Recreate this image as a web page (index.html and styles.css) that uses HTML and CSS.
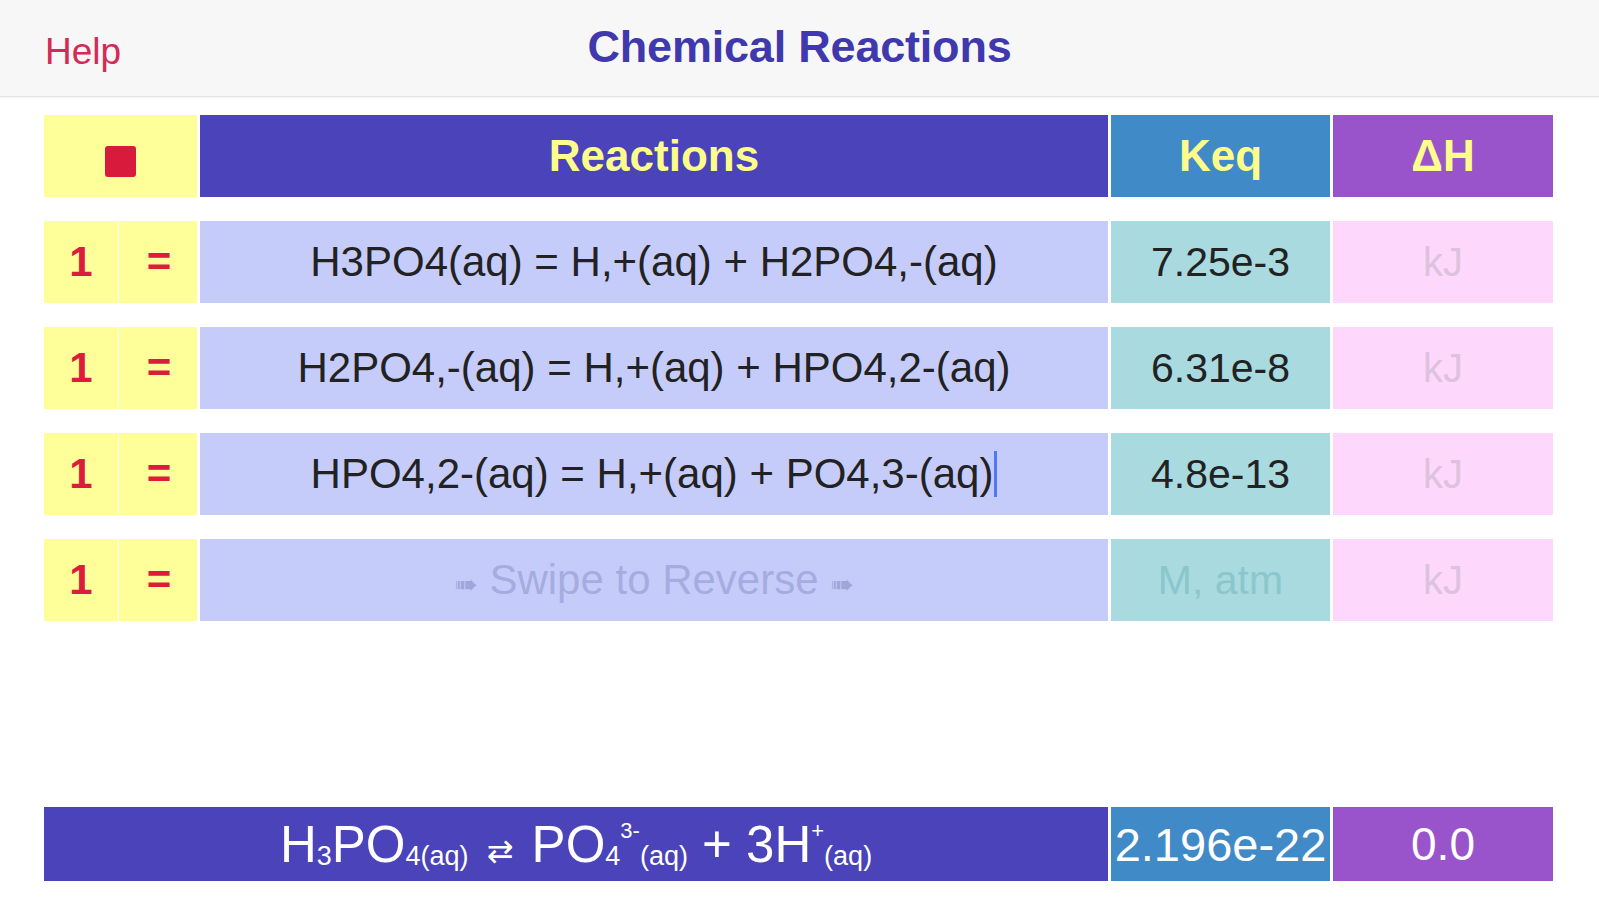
FILE: index.html
```html
<!DOCTYPE html>
<html lang="en">
<head>
<meta charset="utf-8">
<title>Chemical Reactions</title>
<link rel="stylesheet" href="styles.css">
</head>
<body>
<header class="topbar">
  <div class="help">Help</div>
  <div class="title">Chemical Reactions</div>
  <div class="spacer"></div>
</header>

<main class="page">
  <section class="table">
    <div class="cell head-stop"><span class="stop"></span></div>
    <div class="cell head-rx">Reactions</div>
    <div class="cell head-keq">Keq</div>
    <div class="cell head-dh">ΔH</div>

    <div class="cell coef">1</div>
    <div class="cell eq">=</div>
    <div class="cell rx">H3PO4(aq) = H,+(aq) + H2PO4,-(aq)</div>
    <div class="cell keq">7.25e-3</div>
    <div class="cell dh">kJ</div>

    <div class="cell coef">1</div>
    <div class="cell eq">=</div>
    <div class="cell rx">H2PO4,-(aq) = H,+(aq) + HPO4,2-(aq)</div>
    <div class="cell keq">6.31e-8</div>
    <div class="cell dh">kJ</div>

    <div class="cell coef">1</div>
    <div class="cell eq">=</div>
    <div class="cell rx"><span>HPO4,2-(aq) = H,+(aq) + PO4,3-(aq)<span class="caret"></span></span></div>
    <div class="cell keq">4.8e-13</div>
    <div class="cell dh">kJ</div>

    <div class="cell coef">1</div>
    <div class="cell eq">=</div>
    <div class="cell rx placeholder"><span><span class="arrow">➠</span> Swipe to Reverse <span class="arrow">➠</span></span></div>
    <div class="cell keq placeholder-keq">M, atm</div>
    <div class="cell dh">kJ</div>
  </section>

  <section class="summary">
    <div class="cell sum-rx"><span class="formula">H<sub>3</sub>PO<sub>4(aq)</sub> <span class="eqarrow">⇄</span> PO<sub>4</sub><sup>3-</sup><sub>(aq)</sub> + 3H<sup>+</sup><sub>(aq)</sub></span></div>
    <div class="cell sum-keq">2.196e-22</div>
    <div class="cell sum-dh">0.0</div>
  </section>
</main>
</body>
</html>
```

FILE: styles.css
```css
html, body {
  margin: 0;
  padding: 0;
  background: #ffffff;
  font-family: "Liberation Sans", Arial, sans-serif;
}

.topbar {
  height: 96px;
  background: #f7f7f7;
  border-bottom: 1px solid #e3e3e3;
  box-shadow: 0 1px 2px rgba(0, 0, 0, 0.05);
  display: grid;
  grid-template-columns: 1fr auto 1fr;
  align-items: center;
}

.help {
  padding-left: 45px;
  padding-top: 8px;
  font-size: 37px;
  color: #d42a55;
}

.title {
  font-size: 45px;
  font-weight: bold;
  color: #4039ae;
  letter-spacing: -0.2px;
  padding-bottom: 2px;
}

.page {
  padding: 18px 0 0 44px;
}

.table,
.summary {
  display: grid;
  grid-template-columns: 74px 76px 908px 219px 220px;
  column-gap: 3px;
}

.table {
  grid-auto-rows: 82px;
  row-gap: 24px;
}

.summary {
  margin-top: 186px;
  height: 74px;
}

.cell {
  display: flex;
  align-items: center;
  justify-content: center;
  white-space: nowrap;
}

.head-stop {
  grid-column: 1 / 3;
  background: #ffff99;
}

.stop {
  width: 31px;
  height: 31px;
  border-radius: 3px;
  background: #d81b3c;
  margin-top: 10px;
}

.head-rx,
.head-keq,
.head-dh {
  font-size: 44px;
  font-weight: bold;
  color: #fdfd8c;
}

.head-rx { background: #4a43b9; }
.head-keq { background: #418ac8; }
.head-dh { background: #9a54cb; }

.coef,
.eq {
  background: #ffff99;
  color: #dc1c3c;
  font-size: 42px;
  font-weight: bold;
}

.eq {
  box-shadow: -2px 0 0 #ffff99;
}

.rx {
  background: #c6ccfa;
  color: #222222;
  font-size: 42px;
}

.keq {
  background: #a8dae0;
  color: #222222;
  font-size: 41px;
}

.dh {
  background: #fed8fc;
  color: #dcc2de;
  font-size: 40px;
}

.placeholder {
  color: #a6acdf;
}

.placeholder .arrow {
  font-family: "DejaVu Sans", sans-serif;
  font-size: 28px;
  color: #a0a6da;
}

.placeholder-keq {
  color: #8cc6cd;
}

.caret {
  display: inline-block;
  width: 3px;
  height: 46px;
  background: #5078f6;
  margin-left: 1px;
  vertical-align: -9px;
}

.sum-rx,
.sum-keq,
.sum-dh {
  color: #ffffff;
}

.sum-rx {
  grid-column: 1 / 4;
  background: #4a43b9;
  font-size: 51px;
}

.formula sub {
  font-size: 27px;
  vertical-align: -3px;
}

.formula sup {
  font-size: 22px;
  vertical-align: 24px;
}

.formula .eqarrow {
  font-family: "DejaVu Sans", sans-serif;
  font-size: 32px;
  margin: 0 4px;
}

.sum-keq {
  background: #418ac8;
  font-size: 47px;
}

.sum-dh {
  background: #9a54cb;
  font-size: 46px;
}
```
